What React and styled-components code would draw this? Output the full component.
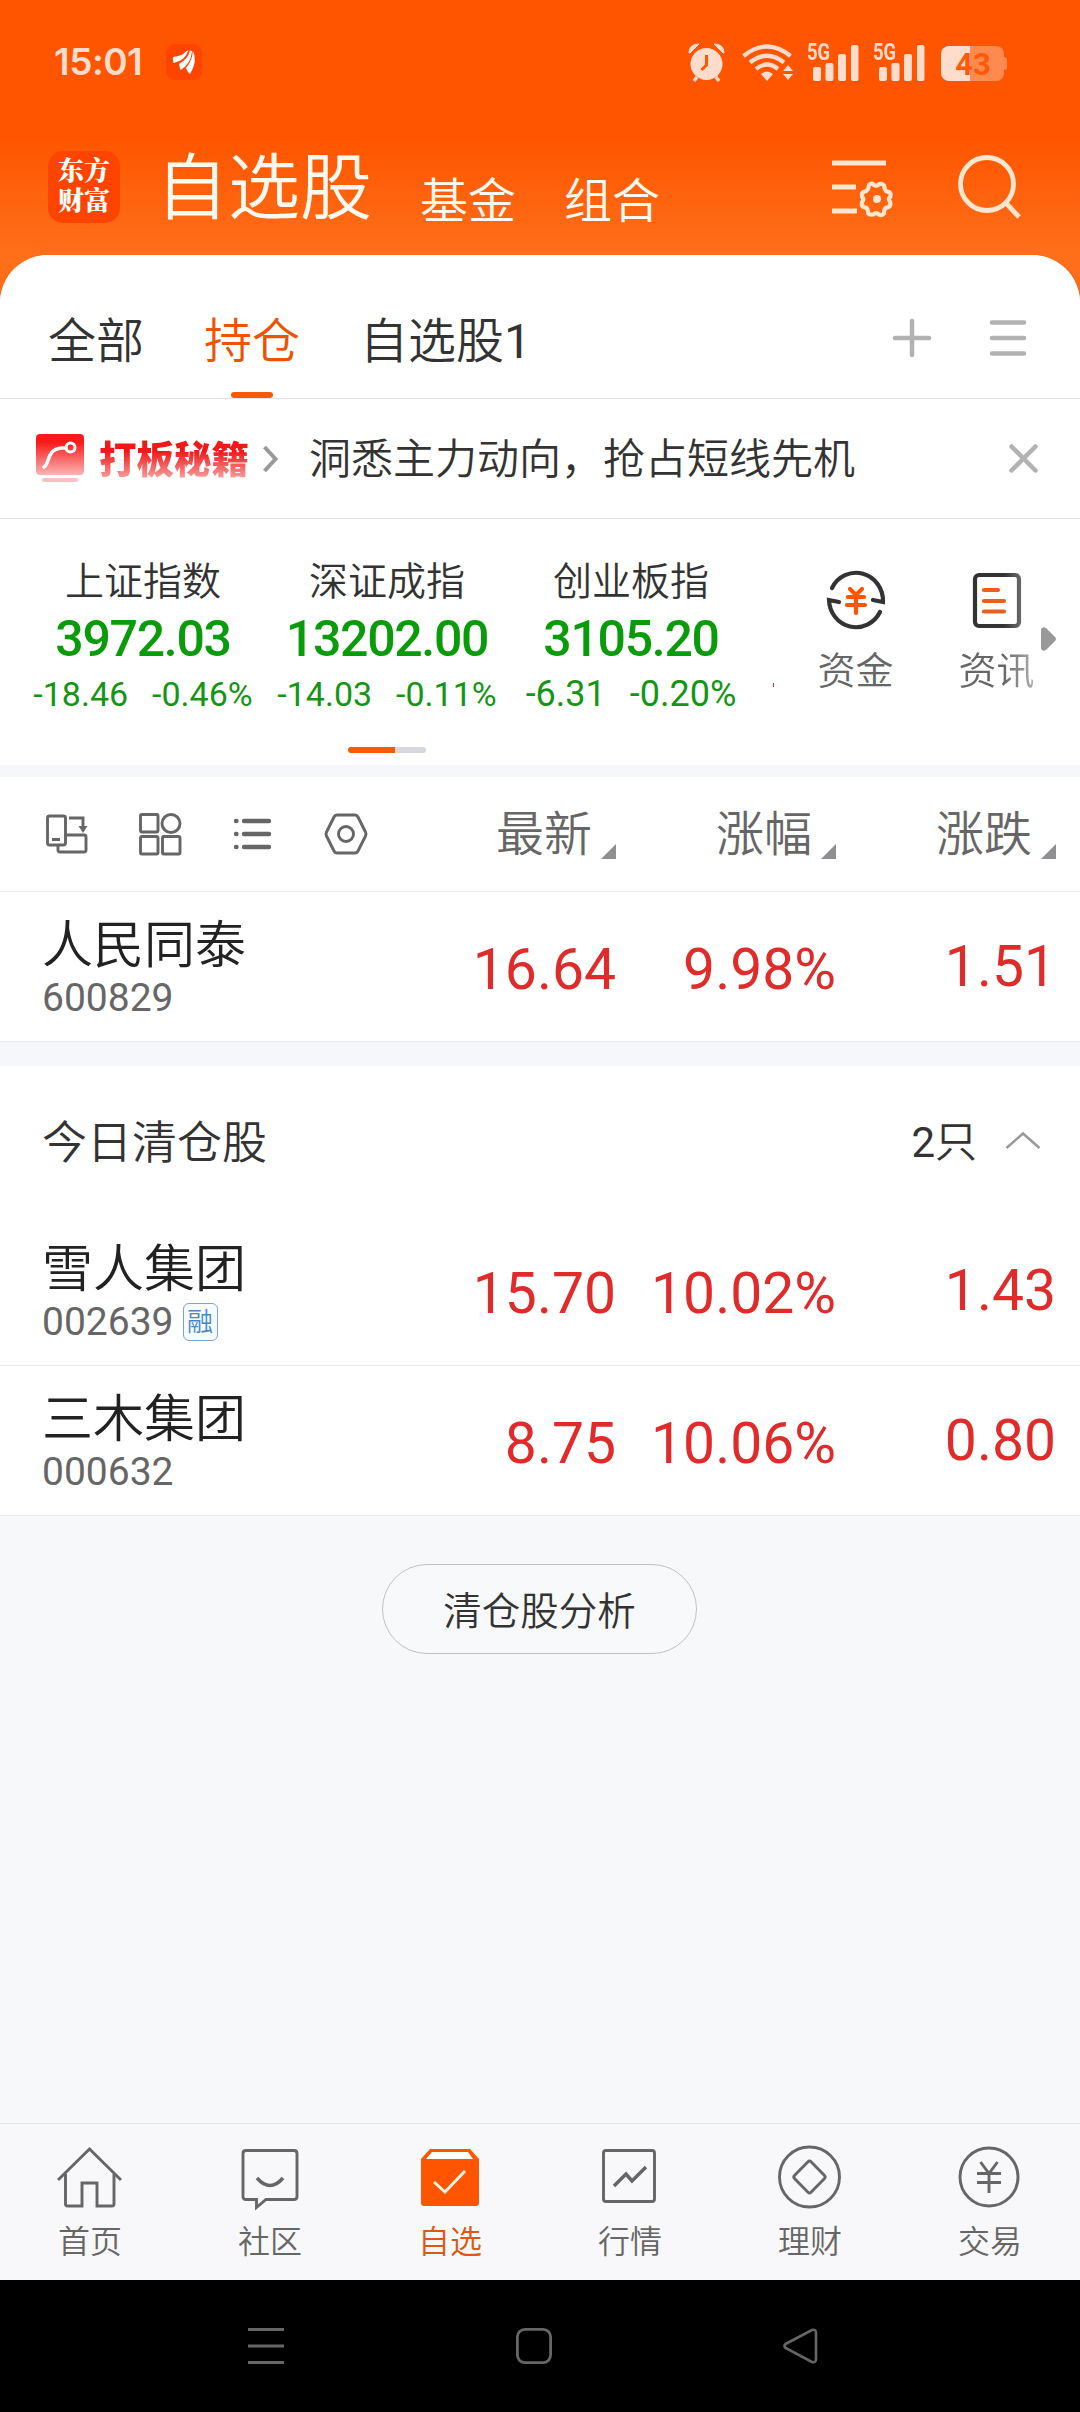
import React, { useState } from "react";
import styled, { createGlobalStyle, css } from "styled-components";
//
const GlobalStyle = createGlobalStyle`
  * {
    box-sizing: border-box;
  }
  body {
    margin: 0;
    background: #f6f8fa;
    font-family: Roboto, "Noto Sans CJK SC", sans-serif;
    color: #333;
  }
`;
//
const Page = styled.div`
  width: 1080px;
  height: 2412px;
  display: flex;
  flex-direction: column;
  overflow: hidden;
  background: linear-gradient(#ff5500 138px, #ff6f1a 255px, #ff6a14 320px);
`;
const Icon = styled.svg`
  display: block;
  flex: none;
  overflow: visible;
  fill: none;
`;
/* status bar */
const StatusBar = styled.div`
  display: flex;
  align-items: center;
  height: 124px;
  padding: 0 76px 0 54px;
`;
const Clock = styled.span`
  width: 112px;
  font-family: Inter, Roboto, sans-serif;
  font-size: 37px;
  font-weight: 600;
  line-height: 40px;
  letter-spacing: -0.5px;
  color: #ffdccb;
`;
const StatusIcons = styled.div`
  display: flex;
  align-items: center;
  margin-left: auto;
  color: #ffdccb;
`;
const Signal = styled.div`
  position: relative;
  margin-left: 14px;
`;
const SignalType = styled.span`
  position: absolute;
  left: 0;
  top: 0;
  font-size: 23px;
  font-weight: 700;
  line-height: 18px;
  transform: scaleX(0.8);
  transform-origin: left;
`;
const Battery = styled.div`
  position: relative;
  width: 63px;
  height: 35px;
  margin-left: 16px;
  margin-top: 2px;
  padding-left: 1px;
  border-radius: 8px;
  background: linear-gradient(90deg, #ffdccb 46.5%, #ff8a4f 46.5%);
  font-size: 31px;
  font-weight: 700;
  line-height: 37px;
  text-align: center;
  color: #ff5a08;
  &::after {
    content: "";
    position: absolute;
    right: -3px;
    top: 11px;
    width: 3px;
    height: 13px;
    border-radius: 0 3px 3px 0;
    background: #ff8a4f;
  }
`;
/* header */
const Header = styled.header`
  display: flex;
  align-items: center;
  height: 131px;
  padding: 0 60px 5px 48px;
  color: #fff9f0;
`;
const Logo = styled.div`
  width: 72px;
  height: 72px;
  padding-top: 6px;
  border-radius: 15px;
  background: #ff4400;
  font-family: "Liberation Serif", "Noto Serif CJK SC", "Noto Sans CJK SC", serif;
  font-size: 26px;
  font-weight: 900;
  line-height: 30px;
  text-align: center;
  color: #fff;
`;
const Title = styled.h1`
  margin: 0 0 0 36px;
  padding-top: 3px;
  font-size: 72px;
  font-weight: 350;
  line-height: 80px;
`;
const HeaderLink = styled.span`
  margin-left: ${props => (props.$first ? 48 : 48)}px;
  padding-top: 30px;
  font-size: 48px;
  font-weight: 350;
  line-height: 56px;
`;
const HeaderTools = styled.div`
  display: flex;
  align-items: center;
  gap: 62px;
  margin-left: auto;
`;
/* white sheet */
const Sheet = styled.main`
  flex: 1;
  display: flex;
  flex-direction: column;
  border-radius: 48px 48px 0 0;
  background: #f6f8fa;
  overflow: hidden;
`;
const Tabs = styled.nav`
  display: flex;
  align-items: center;
  gap: 60px;
  height: 144px;
  padding: 0 54px 0 48px;
  border-bottom: 1px solid #e4e4e4;
  background: #fff;
`;
const Tab = styled.button`
  position: relative;
  height: 143px;
  padding: 30px 0 0;
  border: 0;
  background: none;
  font: inherit;
  font-size: 48px;
  font-weight: 350;
  line-height: 60px;
  color: ${props => (props.$active ? "#ea5504" : "#333")};
  ${props =>
    props.$active &&
    css`
      &::after {
        content: "";
        position: absolute;
        left: 50%;
        bottom: 0;
        width: 42px;
        height: 6px;
        margin-left: -21px;
        border-radius: 3px;
        background: #f45a0a;
      }
    `}
`;
const Digit = styled.span`
  font-weight: 400;
`;
const TabTools = styled.div`
  display: flex;
  align-items: center;
  gap: 59px;
  margin-left: auto;
  padding-top: 23px;
`;
const Banner = styled.div`
  display: flex;
  align-items: center;
  height: 120px;
  padding: 0 42px 0 36px;
  border-bottom: 1px solid #e4e4e4;
  background: #fff;
`;
const BannerTag = styled.strong`
  width: 152px;
  margin: 2px 12px 0 15px;
  font-size: 37.5px;
  font-weight: 900;
  line-height: 44px;
  white-space: nowrap;
  color: transparent;
  background: linear-gradient(#f01818 30%, #f9a5a5 95%);
  background-clip: text;
`;
const BannerText = styled.span`
  flex: 1;
  margin: 2px 0 0 31px;
  font-size: 42px;
  font-weight: 350;
  line-height: 50px;
`;
/* indices */
const IndexPanel = styled.section`
  display: flex;
  flex-direction: column;
  height: 246px;
  background: #fff;
`;
const IndexRow = styled.div`
  display: flex;
  height: 228px;
  padding-left: 21px;
`;
const IndexCard = styled.div`
  width: 244px;
  padding-top: 38px;
  display: flex;
  flex-direction: column;
  align-items: center;
`;
const IndexName = styled.div`
  font-size: 39px;
  font-weight: 350;
  line-height: 50px;
`;
const IndexValue = styled.div`
  font-size: 50px;
  font-weight: 500;
  line-height: 64px;
  letter-spacing: -1.3px;
  color: #0a9b0a;
`;
const IndexChange = styled.div`
  display: flex;
  gap: 24px;
  font-size: ${props => (props.$short ? 36 : 34)}px;
  line-height: 46px;
  color: #149614;
`;
const ClippedCard = styled.div`
  width: 1px;
  height: 4px;
  margin: 164px 0 0 20px;
  background: #c33;
`;
const Shortcuts = styled.div`
  display: flex;
  margin-left: 11px;
`;
const Shortcut = styled.div`
  width: 141px;
  padding-top: 50px;
  display: flex;
  flex-direction: column;
  align-items: center;
  font-size: 38px;
  font-weight: 350;
  line-height: 50px;
  color: #666;
  svg {
    margin-bottom: 15px;
  }
  ${props =>
    props.$fade &&
    css`
      mask-image: linear-gradient(90deg, #000 55%, rgba(0, 0, 0, 0.45) 80%);
    `}
`;
const MoreArrow = styled(Icon)`
  margin: 108px 0 0 -26px;
`;
const Pager = styled.div`
  width: 78px;
  height: 6px;
  margin-left: 348px;
  border-radius: 3px;
  background: linear-gradient(90deg, #f45a0a 60%, #d5d8dc 60%);
`;
const Gap = styled.div`
  height: ${props => props.$size}px;
  background: #f5f7fa;
`;
/* stock table */
const columns = css`
  display: grid;
  grid-template-columns: 396px 220px 220px 220px;
`;
const TableHead = styled.div`
  ${columns}
  align-items: center;
  height: 115px;
  border-bottom: 1px solid #ebebeb;
  background: #fff;
`;
const ViewTools = styled.div`
  display: flex;
  gap: 51px;
  padding-left: 46px;
`;
const Column = styled.div`
  display: flex;
  justify-content: flex-end;
  align-items: flex-end;
  gap: 9px;
  padding-top: 2px;
  font-size: 48px;
  font-weight: 350;
  line-height: 56px;
  color: #666;
  &::after {
    content: "";
    width: 15px;
    height: 15px;
    margin-bottom: 4px;
    background: #8e8e93;
    clip-path: polygon(100% 0, 100% 100%, 0 100%);
  }
`;
const Row = styled.div`
  ${columns}
  height: 150px;
  border-bottom: 1px solid #ebebeb;
  background: #fff;
`;
const Stock = styled.div`
  padding: 23px 0 0 42px;
`;
const StockName = styled.div`
  font-size: 51px;
  font-weight: 350;
  line-height: 62px;
  color: #222;
`;
const StockCode = styled.div`
  display: flex;
  align-items: center;
  gap: 9px;
  font-size: 39px;
  line-height: 42px;
  color: #666;
`;
const Badge = styled.span`
  width: 35px;
  height: 38px;
  border: 1.5px solid #79a6d3;
  border-radius: 6px;
  background: #f6fbff;
  font-size: 26px;
  font-weight: 350;
  line-height: 36px;
  text-align: center;
  color: #4a87c8;
`;
const Num = styled.div`
  padding-top: ${props => (props.$raised ? 42 : 45)}px;
  font-size: 57px;
  line-height: 66px;
  text-align: right;
  color: #e02b2b;
`;
const SectionHead = styled.div`
  display: flex;
  align-items: center;
  height: 150px;
  padding: 3px 39px 0 42px;
  background: #fff;
  font-size: 45px;
  font-weight: 350;
  line-height: 56px;
  svg {
    margin-bottom: 3px;
  }
`;
const SectionTitle = styled.span`
  padding-top: 2px;
`;
const Count = styled.span`
  margin: 0 28px 0 auto;
  font-size: 42px;
`;
const Analyse = styled.button`
  width: 315px;
  height: 90px;
  margin: 48px 0 0 382px;
  padding: 0 0 2px;
  border: 1px solid #c0c1c4;
  border-radius: 45px;
  background: #f8f9fa;
  font: inherit;
  font-size: 38.5px;
  font-weight: 350;
  color: #333;
`;
/* bottom bars */
const BottomNav = styled.nav`
  display: grid;
  grid-template-columns: repeat(6, 180px);
  height: 157px;
  border-top: 1px solid #e2e4e8;
  background: #f8f8fa;
`;
const NavItem = styled.div`
  display: flex;
  flex-direction: column;
  align-items: center;
  padding-top: 21px;
  font-size: 32px;
  font-weight: 350;
  line-height: 44px;
  color: ${props => (props.$active ? "#d95a16" : "#666")};
  svg {
    margin-bottom: 11px;
  }
`;
const SystemNav = styled.div`
  display: flex;
  align-items: center;
  height: 132px;
  padding-left: 248px;
  background: #000;
  color: #666;
`;
const HomeKey = styled(Icon)`
  margin: 0 231px 0 232px;
`;
//
const indices = [
  { name: "上证指数", value: "3972.03", diff: "-18.46", pct: "-0.46%" },
  { name: "深证成指", value: "13202.00", diff: "-14.03", pct: "-0.11%" },
  { name: "创业板指", value: "3105.20", diff: "-6.31", pct: "-0.20%" }
];
const holding = [
  { name: "人民同泰", code: "600829", price: "16.64", pct: "9.98%", diff: "1.51" }
];
const cleared = [
  { name: "雪人集团", code: "002639", badge: "融", price: "15.70", pct: "10.02%", diff: "1.43" },
  { name: "三木集团", code: "000632", price: "8.75", pct: "10.06%", diff: "0.80" }
];
const tabs = [
  { name: "全部" },
  { name: "持仓" },
  { name: "自选股", no: 1 }
];
// paths are drawn on a 64 x 64 grid
const navItems = [
  {
    label: "首页",
    icon: (
      <g>
        <path d="M0 35 31.500 4 63 35" />
        <path d="M7.500 29v30q0 2 2 2H24V38h15v23h15q2 0 2-2V29" />
      </g>
    )
  },
  {
    label: "社区",
    icon: (
      <g>
        <path d="M8 5.500h48q3 0 3 3v43q0 3-3 3H28l-9.500 8V54.500H8q-3 0-3-3v-43q0-3 3-3z" />
        <path strokeWidth="3.500" d="M19 33q13 15 26 0" />
      </g>
    )
  },
  {
    label: "自选",
    active: true,
    icon: (
      <g stroke="none">
        <path fill="#ff5500" d="M12 4h40l9 10v44q0 3-3 3H6q-3 0-3-3V14z" />
        <path fill="#fff" d="M14 7h36l5 7H8z" />
        <path fill="none" stroke="#fff3e0" strokeWidth="3" d="m16 37 11 10 20-21" />
      </g>
    )
  },
  {
    label: "行情",
    icon: (
      <g>
        <rect x="5.500" y="5.500" width="51" height="51" rx="2.500" />
        <path strokeWidth="3.500" d="m16 41 12-12 6 7 14-14" />
      </g>
    )
  },
  {
    label: "理财",
    icon: (
      <g>
        <circle cx="31.500" cy="32" r="30" />
        <path d="M30 16.800q1.500-1.600 3 0L46.500 30.500q1.500 1.500 0 3L33 47.300q-1.500 1.500-3 0L16.500 33.500q-1.500-1.500 0-3z" />
      </g>
    )
  },
  {
    label: "交易",
    icon: (
      <g>
        <circle cx="31" cy="32" r="29" />
        <path d="m22.500 17 8.500 11.500L39.500 17M19 28.500h24M19 37.500h24M31 28v20" />
      </g>
    )
  }
];
//
const SignalBars = () => (
  <Signal>
    <SignalType>5G</SignalType>
    <Icon width="52" height="37">
      <g fill="currentColor">
        <rect x="6" y="23" width="8" height="14" rx="2" />
        <rect x="18.500" y="19" width="8" height="18" rx="2" />
        <rect x="31" y="10" width="8" height="27" rx="2" />
        <rect x="44" y="1" width="7.500" height="36" rx="2" />
      </g>
    </Icon>
  </Signal>
);
const StockRow = ({ stock }) => (
  <Row>
    <Stock>
      <StockName>{stock.name}</StockName>
      <StockCode>
        {stock.code}
        {stock.badge && <Badge>{stock.badge}</Badge>}
      </StockCode>
    </Stock>
    <Num>{stock.price}</Num>
    <Num>{stock.pct}</Num>
    <Num $raised>{stock.diff}</Num>
  </Row>
);
//
export default () => {
  const [tab, setTab] = useState("持仓");
  return (
    <Page>
      <GlobalStyle />
      <StatusBar>
        <Clock>15:01</Clock>
        <Icon width="36" height="36">
          <rect width="36" height="36" rx="9" fill="#ff4400" />
          <g fill="#fff">
            <path d="M7 13Q16 12 20 7.500L22.500 6Q19 17 7.500 19Q6.500 16 7 13z" />
            <path d="M13 20Q22 15 24 6.500L26 7Q25 20 14.500 26Q13.500 23 13 20z" />
            <path d="M20 24Q26 17 27 7Q32 17 24 30Q22 29 20 24z" />
          </g>
        </Icon>
        <StatusIcons>
          <Icon width="37" height="38">
            <circle cx="18.500" cy="21" r="16" fill="currentColor" />
            <path d="M1 10Q1 1 11 1L2 10zM36 10Q36 1 26 1l9 9z" fill="currentColor" stroke="currentColor" />
            <path d="m9 34-3 4M28 34l3 4" stroke="currentColor" strokeWidth="3.500" />
            <path d="M18.500 12v10l-5 5" stroke="#ff5500" strokeWidth="3" />
          </Icon>
          <Icon width="68" height="37" viewBox="-17 0 68 37">
            <g stroke="currentColor" strokeWidth="4.200">
              <path d="M1.500 12Q25 -7 48.500 12M8 18.500Q25 5 42 18.500M14 25Q25 16 36 25" />
            </g>
            <path d="M19 30q6-5 12 0l-6 7z" fill="currentColor" />
            <path d="m46 21 5 6H41zM41 30h10l-5 6z" fill="currentColor" />
          </Icon>
          <SignalBars />
          <SignalBars />
          <Battery>43</Battery>
        </StatusIcons>
      </StatusBar>
      <Header>
        <Logo>
          <div>东方</div>
          <div>财富</div>
        </Logo>
        <Title>自选股</Title>
        <HeaderLink $first>基金</HeaderLink>
        <HeaderLink>组合</HeaderLink>
        <HeaderTools>
          <Icon width="64" height="62" stroke="#ffe6cf" strokeWidth="5">
            <path d="M0 7h54M0 31h24M0 55h25" />
            <path
              strokeWidth="4.800"
              strokeLinejoin="round"
              d="M37 29q4-2 5 0 3 3 6 0 3-2 6 1 1 7 4 7 5 1 3 6-3 3 0 6 1 5-3 6-4 0-4 7-3 3-6 1-3-3-6 0-4 1-6-1 0-7-4-7-4-1-3-6 3-3 0-6-1-5 3-6 4 0 5-8z"
              transform="translate(4.500 3) scale(0.880)"
            />
            <circle cx="45" cy="43" r="4" fill="#ffe6cf" stroke="none" />
          </Icon>
          <Icon width="62" height="62" stroke="#ffe6cf" strokeWidth="4.800">
            <circle cx="29" cy="28" r="26.500" />
            <path d="m47 46 14 15" />
          </Icon>
        </HeaderTools>
      </Header>
      <Sheet>
        <Tabs>
          {tabs.map(item => (
            <Tab key={item.name} $active={tab === item.name} onClick={() => setTab(item.name)}>
              {item.name}
              {item.no && <Digit>{item.no}</Digit>}
            </Tab>
          ))}
          <TabTools>
            <Icon width="38" height="38" stroke="#b2b2b2" strokeWidth="4.500" strokeLinecap="round">
              <path d="M19 2v34M2 19h34" />
            </Icon>
            <Icon width="36" height="38" stroke="#b2b2b2" strokeWidth="4.500" strokeLinecap="round">
              <path d="M2 3.500h32M2 19h32M2 34.500h32" />
            </Icon>
          </TabTools>
        </Tabs>
        <Banner>
          <Icon width="48" height="50">
            <defs>
              <linearGradient id="tag" x2="0" y2="1">
                <stop offset="0.200" stopColor="#fa1a1a" />
                <stop offset="1" stopColor="#fbb4b4" />
              </linearGradient>
            </defs>
            <rect y="0" width="48" height="41" rx="4" fill="url(#tag)" />
            <rect x="6" y="44" width="36" height="4" rx="2" fill="#f7c2c2" />
            <path d="M8 33C14 30 10 15 26 14h4" stroke="#fff" strokeWidth="3.600" strokeLinecap="round" />
            <circle cx="34.500" cy="13.500" r="4.500" stroke="#fff" strokeWidth="3" />
          </Icon>
          <BannerTag>打板秘籍</BannerTag>
          <Icon width="15" height="26" stroke="#999" strokeWidth="4">
            <path d="m1.500 1 11 12-11 12" />
          </Icon>
          <BannerText>洞悉主力动向，抢占短线先机</BannerText>
          <Icon width="29" height="29" stroke="#b2b2b2" strokeWidth="4.500" strokeLinecap="round">
            <path d="m2.500 2.500 24 24M26.500 2.500l-24 24" />
          </Icon>
        </Banner>
        <IndexPanel>
          <IndexRow>
            {indices.map(item => (
              <IndexCard key={item.name}>
                <IndexName>{item.name}</IndexName>
                <IndexValue>{item.value}</IndexValue>
                <IndexChange $short={item.diff.length < 6}>
                  <span>{item.diff}</span>
                  <span>{item.pct}</span>
                </IndexChange>
              </IndexCard>
            ))}
            <ClippedCard />
            <Shortcuts>
              <Shortcut>
                <Icon width="60" height="62" stroke="#333" strokeWidth="4.200" strokeLinecap="round">
                  <path d="M6 19A27 28 0 0 1 57 33l-10-2" />
                  <path d="M13 33 3 31A27 28 0 0 0 54 43" />
                  <path stroke="#ff5500" d="m24 20 6 6 6-6M22 28h16M21 36h18M30 27v17" />
                </Icon>
                资金
              </Shortcut>
              <Shortcut $fade>
                <Icon width="48" height="62" stroke="#333" strokeWidth="4.200" strokeLinecap="round">
                  <rect x="2" y="6" width="44" height="51" rx="4" />
                  <path stroke="#e8601c" d="M11 21h14M11 32h20M11 42.500h20" />
                </Icon>
                资讯
              </Shortcut>
            </Shortcuts>
            <MoreArrow width="15" height="24">
              <path fill="#999" d="M0 2q2-3 5-1l9 9q2 2 0 4l-9 9q-3 2-5-1z" />
            </MoreArrow>
          </IndexRow>
          <Pager />
        </IndexPanel>
        <Gap $size={12} />
        <TableHead>
          <ViewTools>
            <Icon width="42" height="42" stroke="#666" strokeWidth="2.900">
              <rect x="1.500" y="3" width="18" height="29" rx="2" />
              <path d="M6 26.500h8M12 32v5q0 2 2 2h24q2 0 2-2V24q0-2-2-2H20M23 5h14v10" />
              <path d="M32.500 13h9L37 20z" fill="#666" stroke="none" />
            </Icon>
            <Icon width="42" height="42" stroke="#666" strokeWidth="2.900">
              <rect x="1.500" y="1.500" width="17.500" height="17.500" rx="1.500" />
              <circle cx="32" cy="10.500" r="9" />
              <rect x="1.500" y="23.500" width="17.500" height="17.500" rx="1.500" />
              <rect x="23.500" y="23.500" width="17.500" height="17.500" rx="1.500" />
            </Icon>
            <Icon width="42" height="42" stroke="#666" strokeWidth="4.400" strokeLinecap="round">
              <path d="M12 8h25M12 21h25M12 34h25M4 8h.5M4 21h.5M4 34h.5" />
            </Icon>
            <Icon width="42" height="42" stroke="#666" strokeWidth="2.900">
              <path d="M12 2h18q2 0 3 2l7.500 15q1 2 0 4l-7.500 15q-1 2-3 2H12q-2 0-3-2L1.500 23q-1-2 0-4L9 4q1-2 3-2z" />
              <circle cx="21" cy="21" r="7.500" />
            </Icon>
          </ViewTools>
          <Column>最新</Column>
          <Column>涨幅</Column>
          <Column>涨跌</Column>
        </TableHead>
        {holding.map(stock => (
          <StockRow key={stock.code} stock={stock} />
        ))}
        <Gap $size={24} />
        <SectionHead>
          <SectionTitle>今日清仓股</SectionTitle>
          <Count>
            <Digit>{cleared.length}</Digit>只
          </Count>
          <Icon width="36" height="18" stroke="#999" strokeWidth="2.500">
            <path d="m1.500 16 16.500-14.500L34.500 16" />
          </Icon>
        </SectionHead>
        {cleared.map(stock => (
          <StockRow key={stock.code} stock={stock} />
        ))}
        <Analyse>清仓股分析</Analyse>
      </Sheet>
      <BottomNav>
        {navItems.map(item => (
          <NavItem key={item.label} $active={item.active}>
            <Icon width="64" height="64" stroke="currentColor" strokeWidth="2.900">
              {item.icon}
            </Icon>
            {item.label}
          </NavItem>
        ))}
      </BottomNav>
      <SystemNav>
        <Icon width="36" height="36" stroke="currentColor" strokeWidth="3">
          <path d="M0 1.500h36M0 18h36M0 34.500h36" />
        </Icon>
        <HomeKey width="36" height="36" stroke="currentColor" strokeWidth="2.800">
          <rect x="1.400" y="1.400" width="33.200" height="33.200" rx="7.500" />
        </HomeKey>
        <Icon width="34" height="36" stroke="currentColor" strokeWidth="2.600">
          <path d="M2.500 16 29 2q4-1 4 3v26q0 4-4 3L2.500 20q-2-2 0-4z" />
        </Icon>
      </SystemNav>
    </Page>
  );
};
